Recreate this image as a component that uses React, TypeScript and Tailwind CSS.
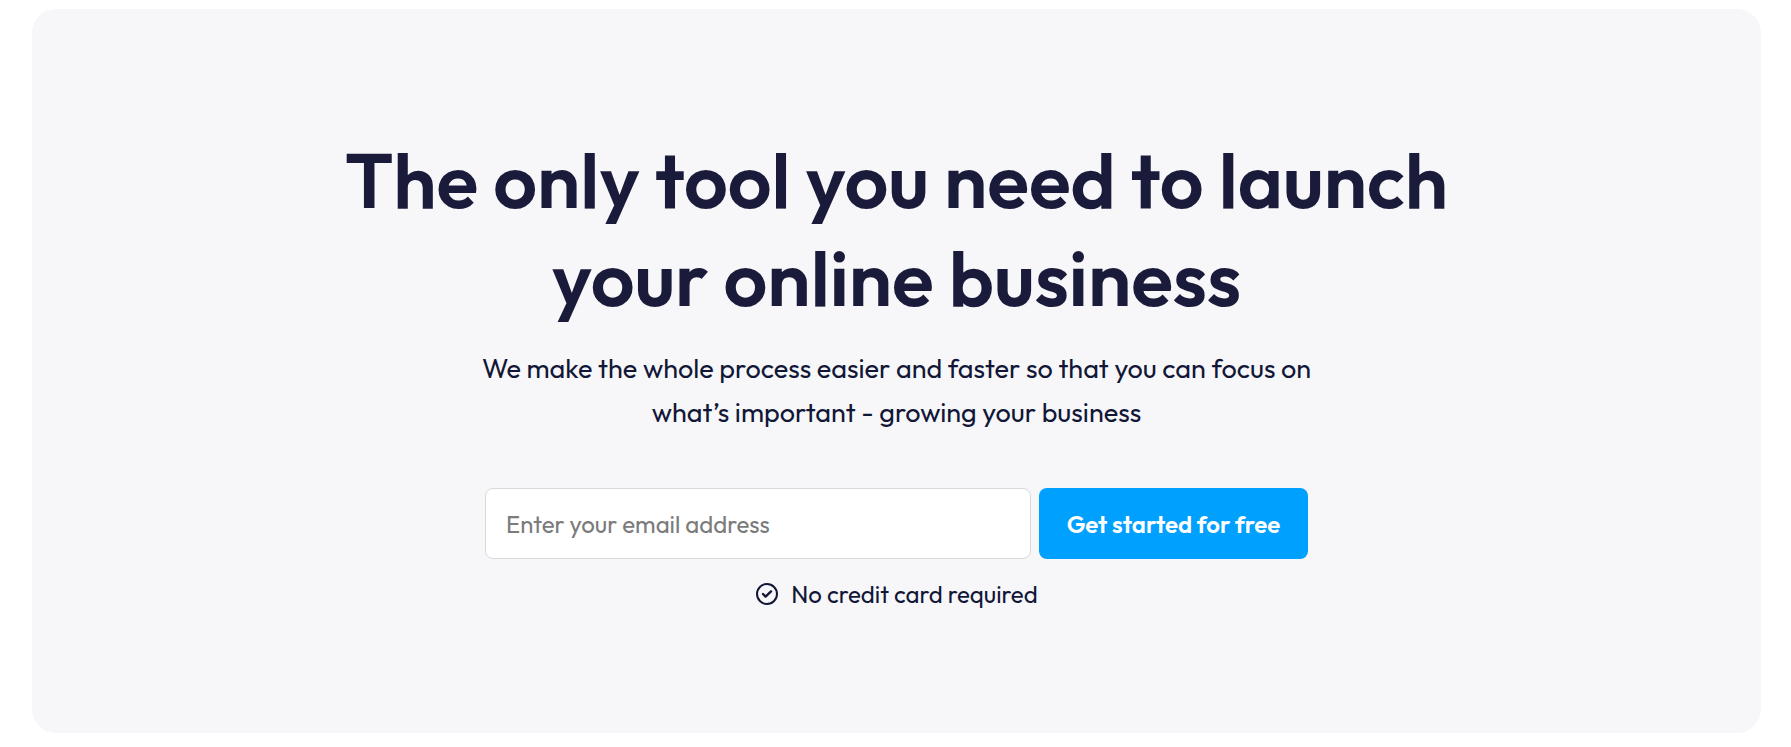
import { useState } from "react";

export default function App() {
  return (
    <main className="bg-white pt-[9px] pr-[30px] pb-3.5 pl-8 font-['Outfit','Lato',sans-serif]">
      <CallToAction />
    </main>
  );
}

const CallToAction = () => {
  return (
    <section className="flex flex-col items-center rounded-3xl bg-[#f7f7fa] px-6 pt-[122px] pb-[120px] text-center text-[#1a1b3a]">
      <h1 className="text-[77px] leading-[98px] font-semibold">
        The only tool you need to launch
        <br />
        your online business
      </h1>
      <p className="mt-[19px] text-[27px] leading-[44px] text-[#121737]">
        We make the whole process easier and faster so that you can focus on
        <br />
        what’s important - growing your business
      </p>
      <SignupForm />
      <p className="mt-4 flex items-center gap-3 text-2xl leading-[38px] text-[#121737]">
        <CheckIcon />
        No credit card required
      </p>
    </section>
  );
};

const SignupForm = () => {
  const [email, setEmail] = useState("");

  return (
    <form
      className="mt-[54px] flex w-full max-w-[823px] gap-2"
      onSubmit={(e) => e.preventDefault()}
    >
      <input
        type="email"
        aria-label="Email address"
        value={email}
        onChange={(e) => setEmail(e.target.value)}
        placeholder="Enter your email address"
        className="h-[71px] min-w-0 flex-1 rounded-lg border border-[#d9d9dc] bg-white px-5 text-2xl placeholder:text-[#7b7b7b]"
      />
      <button
        type="submit"
        className="h-[71px] w-[269px] rounded-lg bg-[#00a0ff] text-2xl font-semibold text-white"
      >
        Get started for free
      </button>
    </form>
  );
};

const CheckIcon = () => (
  <svg
    width="24"
    height="24"
    viewBox="0 0 24 24"
    fill="none"
    stroke="currentColor"
    strokeWidth="2"
    strokeLinecap="round"
    strokeLinejoin="round"
    aria-hidden="true"
  >
    <circle cx="12" cy="12" r="10" />
    <path strokeWidth="2.4" d="M8 12l2.6 2.6L16 9.4" />
  </svg>
);
